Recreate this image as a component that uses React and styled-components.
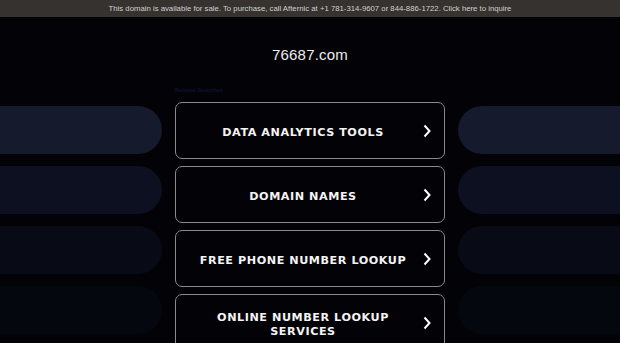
import React from 'react'
import styled, { createGlobalStyle } from 'styled-components'

const GlobalStyle = createGlobalStyle`
    html, body {
        margin: 0;
        padding: 0;
        background: #030307;
        overflow: hidden;
    }
    * { box-sizing: border-box; }
`

const Page = styled.div`
    width: 620px;
    height: 343px;
    overflow: hidden;
    background: #030307;
    font-family: "Liberation Sans", Arial, sans-serif;
`

const SaleBar = styled.div`
    height: 17px;
    background: #35322f;
    color: #d2d0cd;
    font-size: 7.75px;
    line-height: 17px;
    text-align: center;
    white-space: nowrap;
`

const Header = styled.header`
    padding: 29px 0 20px;
    text-align: center;
`

const Title = styled.h1`
    margin: 0;
    font-size: 15px;
    line-height: 18px;
    font-weight: 400;
    letter-spacing: 0.2px;
    color: #ececec;
`

const Main = styled.div`
    display: grid;
    grid-template-columns: 162px 270px 1fr;
    column-gap: 13px;
`

const PillColumn = styled.div`
    display: flex;
    flex-direction: column;
    gap: 12px;
    padding-top: 22px;
`

const Pill = styled.div`
    height: 48px;
    background: ${p => p.$color};
    border-radius: ${p => (p.$side === 'left' ? '0 24px 24px 0' : '24px 0 0 24px')};
`

const Center = styled.div`
    display: flex;
    flex-direction: column;
`

const Label = styled.div`
    font-size: 6px;
    line-height: 12px;
    height: 12px;
    margin-bottom: 6px;
    color: #12153a;
`

const List = styled.div`
    display: flex;
    flex-direction: column;
    gap: 7px;
`

const LinkButton = styled.a`
    position: relative;
    display: flex;
    align-items: center;
    justify-content: center;
    height: 57px;
    padding: 4px 36px 0 22px;
    border: 1.5px solid #8a8a8a;
    border-radius: 7px;
    color: #f4f4f4;
    font-family: "DejaVu Sans", Verdana, sans-serif;
    font-weight: 700;
    font-size: 11.2px;
    line-height: 14px;
    letter-spacing: 0.55px;
    text-align: center;
    text-decoration: none;
`

const Chevron = styled.svg`
    position: absolute;
    right: 12px;
    top: 50%;
    width: 10px;
    height: 14px;
    margin-top: -7px;
`

const pillColors = ['#151a2d', '#0d1020', '#080a15', '#05070f']

const links = [
    'DATA ANALYTICS TOOLS',
    'DOMAIN NAMES',
    'FREE PHONE NUMBER LOOKUP',
    'ONLINE NUMBER LOOKUP SERVICES',
]

export default function App() {
    return (
        <Page>
            <GlobalStyle />
            <SaleBar>
                This domain is available for sale. To purchase, call Afternic at +1 781-314-9607 or 844-886-1722. Click here to inquire
            </SaleBar>
            <Header>
                <Title>76687.com</Title>
            </Header>
            <Main>
                <PillColumn>
                    {pillColors.map(c => <Pill key={c} $color={c} $side="left" />)}
                </PillColumn>
                <Center>
                    <Label>Related Searches</Label>
                    <List>
                        {links.map(text => (
                            <LinkButton key={text} href="#">
                                {text}
                                <Chevron viewBox="0 0 10 14" fill="none">
                                    <path d="M2.5 1.5 L7.5 7 L2.5 12.5" stroke="#ffffff" strokeWidth="2" />
                                </Chevron>
                            </LinkButton>
                        ))}
                    </List>
                </Center>
                <PillColumn>
                    {pillColors.map(c => <Pill key={c} $color={c} $side="right" />)}
                </PillColumn>
            </Main>
        </Page>
    )
}
